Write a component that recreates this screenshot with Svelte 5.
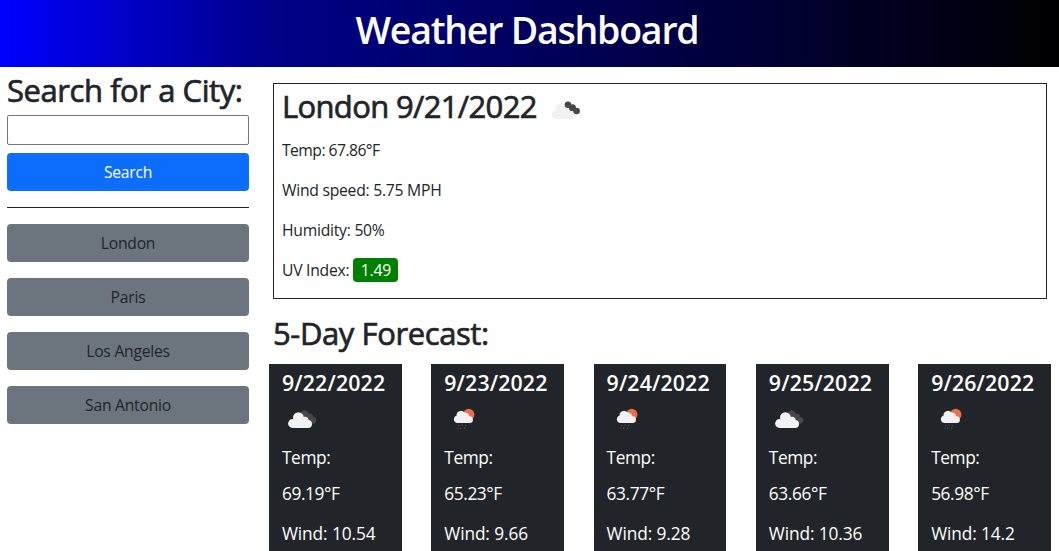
<script>
  const cities = ['London', 'Paris', 'Los Angeles', 'San Antonio'];
  const days = [
    { date: '9/22/2022', icon: 'clouds', temp: '69.19°F', wind: '10.54' },
    { date: '9/23/2022', icon: 'rain', temp: '65.23°F', wind: '9.66' },
    { date: '9/24/2022', icon: 'rain', temp: '63.77°F', wind: '9.28' },
    { date: '9/25/2022', icon: 'clouds', temp: '63.66°F', wind: '10.36' },
    { date: '9/26/2022', icon: 'rain', temp: '56.98°F', wind: '14.2' }
  ];
</script>

{#snippet clouds()}
  <svg class="icon" viewBox="0 0 50 50" width="50" height="50" aria-hidden="true">
    <circle cx="22.500" cy="20.600" r="4.200" fill="#484848" />
    <circle cx="27.500" cy="23.200" r="3.800" fill="#484848" />
    <circle cx="30.800" cy="26.300" r="3.400" fill="#484848" />
    <circle cx="10.500" cy="29.500" r="4.400" fill="#f2f2f2" />
    <circle cx="16.400" cy="23.600" r="5.400" fill="#f2f2f2" />
    <circle cx="22.800" cy="26.600" r="3.900" fill="#f2f2f2" />
    <circle cx="26" cy="30" r="4" fill="#f2f2f2" />
    <path d="M10.500 34v-7h12l3.500 2v5z" fill="#f2f2f2" />
  </svg>
{/snippet}

{#snippet rain()}
  <svg class="icon" viewBox="0 0 50 50" width="50" height="50" aria-hidden="true">
    <circle cx="24.700" cy="20.500" r="5.700" fill="#ec6e4c" />
    <path d="M13 29a3.700 3.700 0 0 1-.5-7.200a4.500 4.500 0 0 1 8-3.200a4.200 4.200 0 0 1 4.800 3.700a3.300 3.300 0 0 1 .5 6.700z" fill="#f2f2f2" />
    <path d="M15 31l-.5 1.200M18.300 30.500l-.5 1.200M21.800 31l-.5 1.200M14 34l-.3.800M17 33.500l-.5 1.500M21 33.500l-.5 1.500" stroke="#505255" stroke-width="1.100" />
  </svg>
{/snippet}

<header><h1>Weather Dashboard</h1></header>
<div class="layout">
  <aside>
    <h2 class="search-title">Search for a City:</h2>
    <input type="text" aria-label="City" />
    <button class="search">Search</button>
    <hr />
    <div class="history">
      {#each cities as city}<button>{city}</button>{/each}
    </div>
  </aside>
  <main>
    <section class="current">
      <div class="heading">
        <h2 class="city">London 9/21/2022</h2>
        <svg class="now" viewBox="0 0 50 50" width="50" height="50" aria-hidden="true">
          <path d="M10.500 34a4.500 4.500 0 0 1-.5-9a5.500 5.500 0 0 1 9.500-4.800a5.300 5.300 0 0 1 5.500 4a4.900 4.900 0 0 1 1.500 9.800z" fill="#f2f2f2" />
          <circle cx="22" cy="19.800" r="3.300" fill="#484848" />
          <circle cx="26.500" cy="22.800" r="3.500" fill="#484848" />
          <circle cx="30.600" cy="26" r="3.300" fill="#484848" />
        </svg>
      </div>
      <p><span class="temp">Temp: 67.86°F</span></p>
      <p><span>Wind speed: 5.75 MPH</span></p>
      <p><span>Humidity: 50%</span></p>
      <p><span>UV Index:</span><span class="badge">1.49</span></p>
    </section>
    <h2 class="forecast-title">5-Day Forecast:</h2>
    <div class="cards">
      {#each days as day}
        <article>
          <h4>{day.date}</h4>
          {#if day.icon === 'clouds'}{@render clouds()}{:else}{@render rain()}{/if}
          <p class="day-temp">Temp:<br />{day.temp}</p>
          <p>Wind: {day.wind}</p>
        </article>
      {/each}
    </div>
  </main>
</div>

<style>
  :global(html), :global(body) { overflow: hidden; height: 551px; }
  :global(body) { margin: 0; background: #fff; }
  :global(#app) { font-family: "Open Sans", "Noto Sans", sans-serif; font-size: 15.700px; letter-spacing: -.25px; color: #212529; height: 551px; overflow: hidden; }
  header { height: 67px; background: linear-gradient(to right, blue 0%, darkblue 25%, black 100%); display: flex; justify-content: center; }
  h1, h2, h4, p { margin: 0; white-space: nowrap; }
  h1 { color: #fff; font-size: 37.500px; font-weight: 600; line-height: 59px; letter-spacing: -1.230px; margin-right: 5px; }
  h2 { font-size: 31px; font-weight: 400; -webkit-text-stroke: .7px #212529; line-height: 38px; letter-spacing: -.400px; }
  .city { letter-spacing: -.660px; margin-top: -4px; }
  .layout { display: flex; }
  aside { width: 242px; padding: 4px 0 0 7px; display: flex; flex-direction: column; }
  .search-title { letter-spacing: -.440px; }
  input { box-sizing: border-box; height: 30px; width: 242px; margin: 6px 0 8px; border: 1px solid #767676; border-radius: 2px; background: #fff; }
  button { height: 38px; border: 0; padding: 0; border-radius: 4px; font: inherit; letter-spacing: inherit; color: #212529; background: #6c757d; }
  .search { background: #0d6efd; color: #fff; }
  hr { width: 100%; height: 1px; border: 0; background: #212529; margin: 16px 0; }
  .history { display: flex; flex-direction: column; gap: 16px; }
  main { margin-left: 20px; width: 782px; padding-top: 16px; }
  .current { box-sizing: border-box; height: 216px; width: 774px; margin-left: 4px; border: 1px solid #212529; padding: 0 8px; }
  .heading { display: flex; align-items: center; height: 48px; margin-bottom: 7px; }
  .now { margin: 4px 0 0 9px; }
  .current p { height: 24px; line-height: 22px; margin-bottom: 16px; display: flex; }
  .temp { letter-spacing: -.540px; }
  .badge { width: 45px; height: 24px; margin-top: -1px; line-height: 24px; text-align: center; margin-left: 4px; background: green; color: #fff; border-radius: 4px; }
  .forecast-title { margin: 15px 0 12px 4px; }
  .cards { display: flex; gap: 29.400px; }
  article { box-sizing: border-box; width: 132.900px; flex: none; height: 200px; padding: 5px 13px; background: #212529; color: #fff; font-size: 17.300px; letter-spacing: -.1px; }
  h4 { font-size: 21.300px; line-height: 28px; font-weight: 600; letter-spacing: .150px; }
  .icon { display: block; margin: -3px 0 -4px; height: 50px; }
  article p { line-height: 36px; margin-bottom: 4px; }
  .day-temp { letter-spacing: -.400px; }
</style>
